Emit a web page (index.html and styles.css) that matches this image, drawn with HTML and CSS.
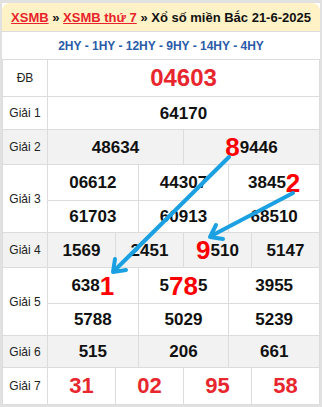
FILE: index.html
```html
<!DOCTYPE html>
<html lang="vi">
<head>
<meta charset="utf-8">
<link rel="stylesheet" href="styles.css">
</head>
<body>
<div class="box">
  <div class="head"><a href="#">XSMB</a>&nbsp;»&nbsp;<a href="#">XSMB thứ 7</a>&nbsp;» Xổ số miền Bắc 21-6-2025</div>
  <div class="hy">2HY - 1HY - 12HY - 9HY - 14HY - 4HY</div>
  <div class="grid">
    <div class="lbl r-db">ĐB</div>
    <div class="c s12 db r-db">04603</div>

    <div class="lbl r-g1">Giải 1</div>
    <div class="c s12 r-g1">64170</div>

    <div class="lbl g r-g2">Giải 2</div>
    <div class="c g s6 r-g2">48634</div>
    <div class="c g s6 r-g2"><b class="hl">8</b>9446</div>

    <div class="lbl r-g3">Giải 3</div>
    <div class="c s4 r-g3a">06612</div>
    <div class="c s4 r-g3a">44307</div>
    <div class="c s4 r-g3a">3845<b class="hl">2</b></div>
    <div class="c s4 r-g3b">61703</div>
    <div class="c s4 r-g3b">60913</div>
    <div class="c s4 r-g3b">68510</div>

    <div class="lbl g r-g4">Giải 4</div>
    <div class="c g s3 r-g4">1569</div>
    <div class="c g s3 r-g4">2451</div>
    <div class="c g s3 r-g4"><b class="hl">9</b>510</div>
    <div class="c g s3 r-g4">5147</div>

    <div class="lbl r-g5">Giải 5</div>
    <div class="c s4 r-g5a">638<b class="hl">1</b></div>
    <div class="c s4 r-g5a">5<b class="hl">78</b>5</div>
    <div class="c s4 r-g5a">3955</div>
    <div class="c s4 r-g5b">5788</div>
    <div class="c s4 r-g5b">5029</div>
    <div class="c s4 r-g5b">5239</div>

    <div class="lbl g r-g6">Giải 6</div>
    <div class="c g s4 r-g6">515</div>
    <div class="c g s4 r-g6">206</div>
    <div class="c g s4 r-g6">661</div>

    <div class="lbl r-g7">Giải 7</div>
    <div class="c s3 red r-g7">31</div>
    <div class="c s3 red r-g7">02</div>
    <div class="c s3 red r-g7">95</div>
    <div class="c s3 red r-g7">58</div>
  </div>
</div>
<svg class="arrows" width="322" height="407" viewBox="0 0 322 407">
  <g fill="none" stroke="#1ba0e2" stroke-width="4" stroke-linecap="round" stroke-linejoin="round">
    <line x1="229" y1="157" x2="114" y2="271"/>
    <polyline points="126,270 113,272 115,259"/>
    <line x1="293" y1="193" x2="211" y2="236"/>
    <polyline points="223,239 210,237 216,225"/>
  </g>
</svg>
</body>
</html>
```
FILE: styles.css
```css
html, body {
  margin: 0;
  padding: 0;
}
body {
  background: #e1e1e1;
  font-family: "Liberation Sans", Arial, sans-serif;
  position: relative;
  width: 322px;
  height: 407px;
  overflow: hidden;
}
.box {
  margin: 3px 2px 0 2px;
  width: 318px;
  background: #fff;
}
.head {
  height: 28px;
  background: #fff2c6;
  border-radius: 8px 8px 0 0;
  display: flex;
  align-items: center;
  justify-content: center;
  font-weight: bold;
  font-size: 13px;
  color: #111;
  border-bottom: 1px solid #dcdcdc;
  white-space: nowrap;
}
.head a {
  color: #e8232b;
  text-decoration: underline;
}
.hy {
  height: 27px;
  display: flex;
  align-items: center;
  justify-content: center;
  font-weight: bold;
  font-size: 12px;
  color: #2a5ba8;
}
.grid {
  display: grid;
  grid-template-columns: 44px repeat(12, 1fr);
  grid-template-rows: 36px 32px 34px 35px 31px 34px 35px 31px 31px 36px;
  gap: 1px;
  background: #dcdcdc;
  padding: 1px;
}
.lbl {
  grid-column: 1;
  background: #fff;
  display: flex;
  align-items: center;
  justify-content: center;
  font-size: 12px;
  color: #222;
}
.c {
  background: #fff;
  display: flex;
  align-items: center;
  justify-content: center;
  font-weight: bold;
  font-size: 17px;
  color: #111;
  line-height: 1;
}
.g { background: #f2f2f2; }
.s12 { grid-column: span 12; }
.s6 { grid-column: span 6; }
.s4 { grid-column: span 4; }
.s3 { grid-column: span 3; }
.r-db { grid-row: 1; }
.r-g1 { grid-row: 2; }
.r-g2 { grid-row: 3; }
.r-g3 { grid-row: 4 / span 2; }
.r-g3a { grid-row: 4; }
.r-g3b { grid-row: 5; }
.r-g4 { grid-row: 6; }
.r-g5 { grid-row: 7 / span 2; }
.r-g5a { grid-row: 7; }
.r-g5b { grid-row: 8; }
.r-g6 { grid-row: 9; }
.r-g7 { grid-row: 10; }
.db {
  color: #e8262e;
  font-size: 24px;
}
.red {
  color: #e8262e;
  font-size: 22px;
}
.hl {
  color: #ff0000;
  font-size: 26px;
  line-height: 1;
}
.arrows {
  position: absolute;
  left: 0;
  top: 0;
  pointer-events: none;
}
```
